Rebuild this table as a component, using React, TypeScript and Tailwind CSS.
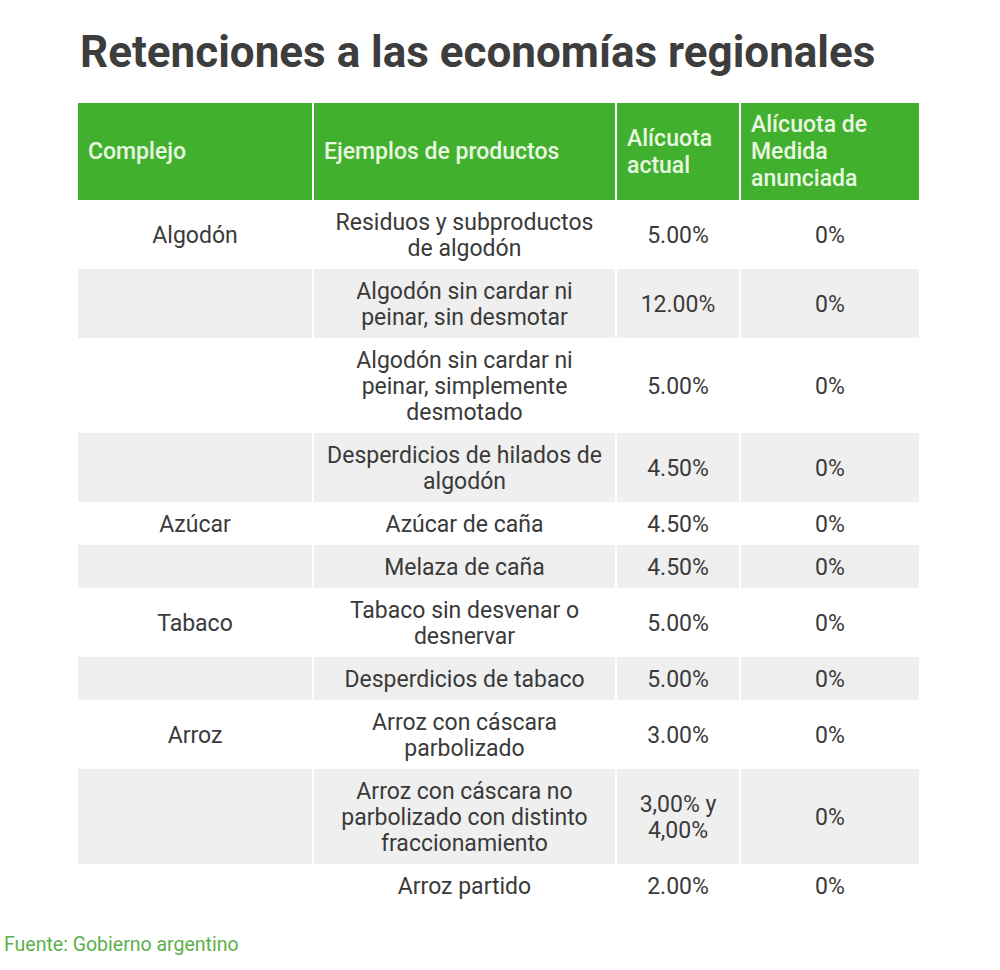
import React from 'react';

type Row = {
    complejo?: string;
    producto: string[];
    actual: string[];
    medida: string;
};

const rows: Row[] = [
    { complejo: 'Algodón', producto: ['Residuos y subproductos', 'de algodón'], actual: ['5.00%'], medida: '0%' },
    { producto: ['Algodón sin cardar ni', 'peinar, sin desmotar'], actual: ['12.00%'], medida: '0%' },
    { producto: ['Algodón sin cardar ni', 'peinar, simplemente', 'desmotado'], actual: ['5.00%'], medida: '0%' },
    { producto: ['Desperdicios de hilados de', 'algodón'], actual: ['4.50%'], medida: '0%' },
    { complejo: 'Azúcar', producto: ['Azúcar de caña'], actual: ['4.50%'], medida: '0%' },
    { producto: ['Melaza de caña'], actual: ['4.50%'], medida: '0%' },
    { complejo: 'Tabaco', producto: ['Tabaco sin desvenar o', 'desnervar'], actual: ['5.00%'], medida: '0%' },
    { producto: ['Desperdicios de tabaco'], actual: ['5.00%'], medida: '0%' },
    { complejo: 'Arroz', producto: ['Arroz con cáscara', 'parbolizado'], actual: ['3.00%'], medida: '0%' },
    { producto: ['Arroz con cáscara no', 'parbolizado con distinto', 'fraccionamiento'], actual: ['3,00% y', '4,00%'], medida: '0%' },
    { producto: ['Arroz partido'], actual: ['2.00%'], medida: '0%' },
];

function Lines({ lines }: { lines: string[] }) {
    return (
        <>
            {lines.map((l, i) => (
                <div key={i} className="whitespace-nowrap">{l}</div>
            ))}
        </>
    );
}

export default function App() {
    return (
        <div className="w-[1000px] h-[970px] bg-white font-['Roboto',sans-serif] text-[#3a3a3a]">
            <div className="pt-[24px] pl-[80px]">
                <h1 className="text-[44px] font-bold leading-[56px] text-[#3d3d3d] whitespace-nowrap">
                    Retenciones a las economías regionales
                </h1>
            </div>

            <div className="ml-[78px] mt-[23px] w-[841px]">
                {/* header */}
                <div className="grid grid-cols-[234px_301px_122px_178px] gap-x-[2px] h-[97px] text-[23px] leading-[27px] font-medium text-[#e9f8e0]">
                    <div className="bg-[#42b02f] flex items-center pl-[10px]">Complejo</div>
                    <div className="bg-[#42b02f] flex items-center pl-[10px]">Ejemplos de productos</div>
                    <div className="bg-[#42b02f] flex items-center pl-[10px]">
                        <div>Alícuota<br />actual</div>
                    </div>
                    <div className="bg-[#42b02f] flex items-center pl-[10px]">
                        <div>Alícuota de<br />Medida<br />anunciada</div>
                    </div>
                </div>

                {/* body */}
                {rows.map((r, i) => {
                    const bg = i % 2 === 1 ? 'bg-[#efefef]' : 'bg-white';
                    return (
                        <div
                            key={i}
                            className="grid grid-cols-[234px_301px_122px_178px] gap-x-[2px] text-[23px] leading-[26px] text-center"
                        >
                            <div className={`${bg} flex items-center justify-center pt-[9.5px] pb-[7.5px]`}>{r.complejo}</div>
                            <div className={`${bg} flex flex-col items-center justify-center pt-[9.5px] pb-[7.5px]`}>
                                <Lines lines={r.producto} />
                            </div>
                            <div className={`${bg} flex flex-col items-center justify-center pt-[9.5px] pb-[7.5px]`}>
                                <Lines lines={r.actual} />
                            </div>
                            <div className={`${bg} flex items-center justify-center pt-[9.5px] pb-[7.5px]`}>{r.medida}</div>
                        </div>
                    );
                })}
            </div>

            <div className="mt-[26px] pl-[4px] text-[19.5px] leading-[24px] text-[#5cb04a] whitespace-nowrap">
                Fuente: Gobierno argentino
            </div>
        </div>
    );
}
